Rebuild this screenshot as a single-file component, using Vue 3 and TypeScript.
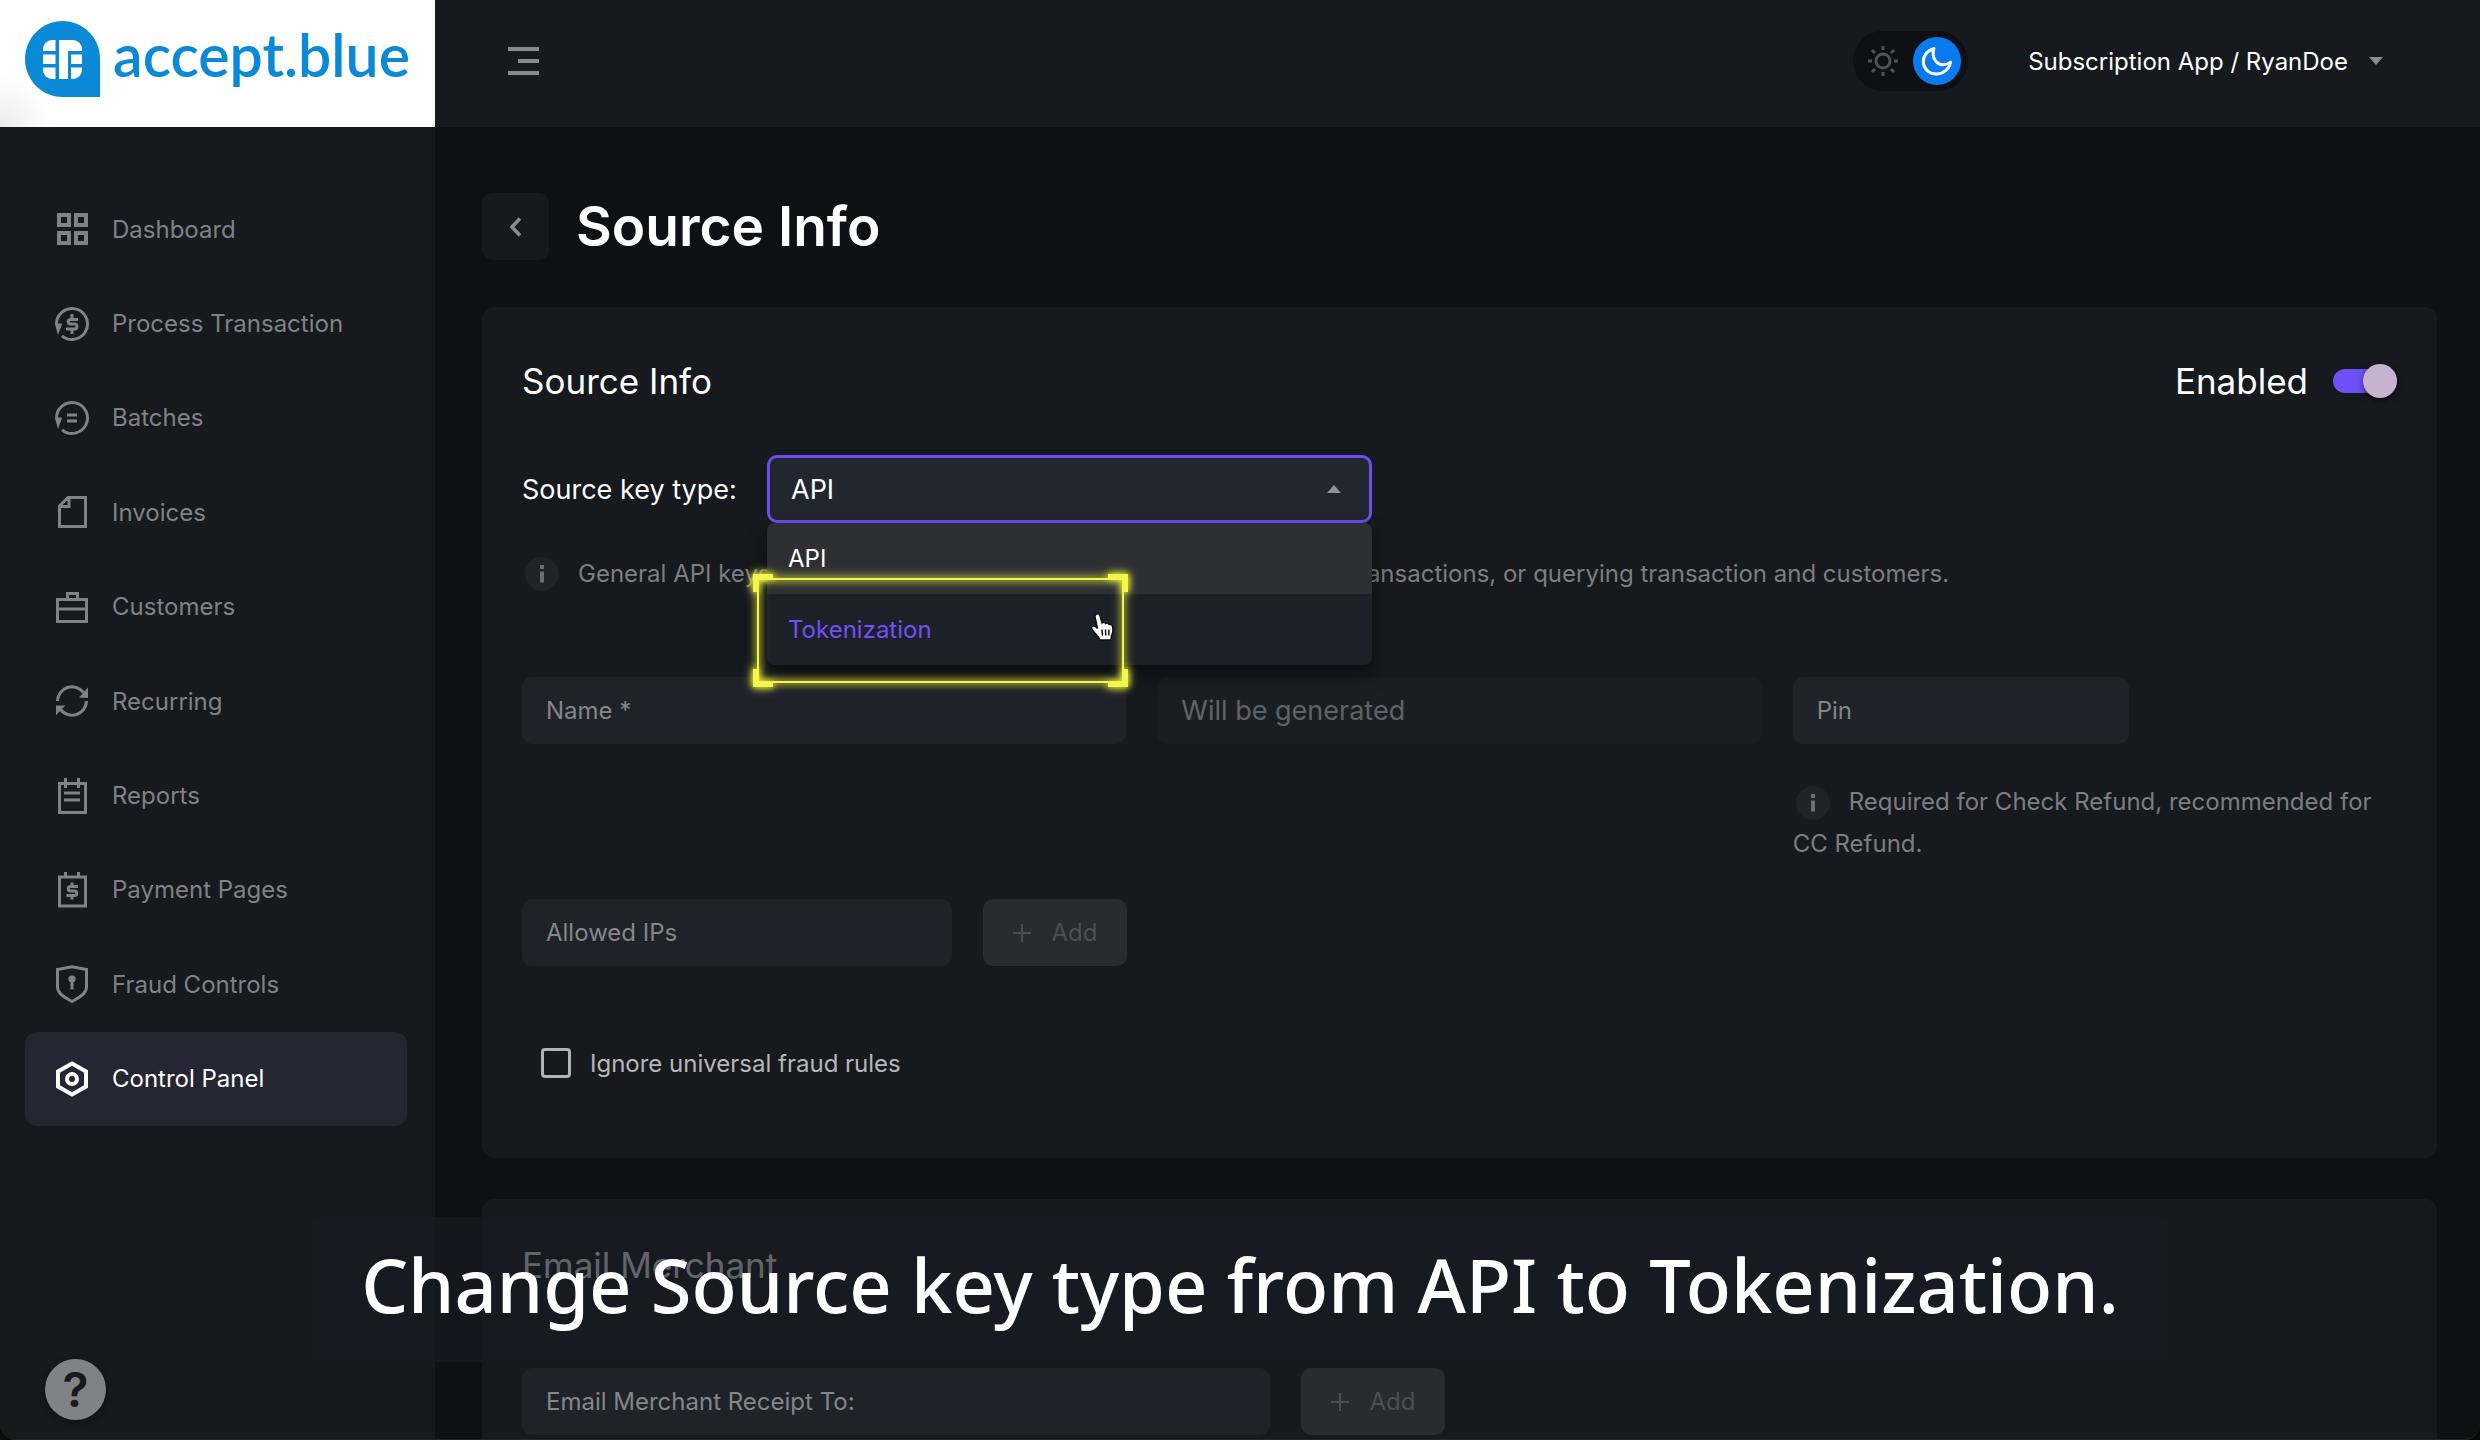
<script setup lang="ts">
import { ref } from 'vue'

interface NavItem {
  label: string
  icon: string
  active?: boolean
}

const navItems: NavItem[] = [
  { label: 'Dashboard', icon: 'dashboard' },
  { label: 'Process Transaction', icon: 'process' },
  { label: 'Batches', icon: 'batches' },
  { label: 'Invoices', icon: 'invoices' },
  { label: 'Customers', icon: 'customers' },
  { label: 'Recurring', icon: 'recurring' },
  { label: 'Reports', icon: 'reports' },
  { label: 'Payment Pages', icon: 'payment' },
  { label: 'Fraud Controls', icon: 'fraud' },
  { label: 'Control Panel', icon: 'control', active: true },
]

const keyTypes = ['API', 'Tokenization']
const keyType = ref('API')
const hovered = ref('Tokenization')
const enabled = ref(true)
const ignoreRules = ref(false)
const name = ref('')
const pin = ref('')
const allowedIps = ref('')
const receiptTo = ref('')
</script>

<template>
  <div class="app">
    <aside class="sidebar">
      <a class="logo" href="#">
        <svg class="logo-mark" viewBox="0 0 75 76" aria-hidden="true">
          <path d="M37.500 0C58.200 0 75 16.800 75 37.500V76H37.500C16.800 76 0 59 0 38S16.800 0 37.500 0Z" fill="#0a8ad6" />
          <rect x="18" y="19" width="39" height="39" rx="9" fill="#fff" />
          <path d="M30.500 19h3.500v39h-3.500zM18 30h13v3.500H18zM18 43h13v3.500H18zM43 30h14v3.500H46V58h-3zM46 43h11v3.500H46z" fill="#0a8ad6" />
        </svg>
        <span class="logo-text">accept.blue</span>
      </a>
      <nav class="nav">
        <a
          v-for="item in navItems"
          :key="item.label"
          href="#"
          class="nav-item"
          :class="{ active: item.active }"
        >
          <svg class="nav-icon" viewBox="0 0 36 36" aria-hidden="true">
            <g v-if="item.icon === 'dashboard'" stroke-width="4">
              <rect x="5" y="4" width="10" height="10" /><rect x="22" y="4" width="10" height="10" />
              <rect x="5" y="22" width="10" height="10" /><rect x="22" y="22" width="10" height="10" />
            </g>
            <g v-else-if="item.icon === 'process'">
              <path d="M2.500 18A15.500 15.500 0 1 1 8 29.800" />
              <path class="solid" d="M.8 17.500h7.400L4 29z" />
              <path d="M24 13.500h-7.500a2.300 2.300 0 0 0 0 4.600h4a2.500 2.500 0 0 1 0 5H12M18 8v5M18 23v5" />
            </g>
            <g v-else-if="item.icon === 'batches'">
              <path d="M2.500 18A15.500 15.500 0 1 1 8 29.800" />
              <path class="solid" d="M.8 17.500h7.400L4 29z" />
              <path d="M13 15h10M13 21h10" />
            </g>
            <path v-else-if="item.icon === 'invoices'" d="M14 3.500H31.500V32.500H5.500V12ZM15 3.500V12.500H5.500" />
            <path v-else-if="item.icon === 'customers'" d="M3.500 10.500h29v22h-29zM3.500 20h29M13.500 10V4.500h10V10" />
            <g v-else-if="item.icon === 'recurring'">
              <path d="M3.500 18A14.500 14.500 0 0 1 29.500 9.500M32.500 18A14.500 14.500 0 0 1 6.500 26.500" />
              <path class="solid" d="M34 4.500V15l-9-.5zM2 22.500h9.500L2 32z" />
            </g>
            <path v-else-if="item.icon === 'reports'" d="M5.500 5.500h26v29h-26zM11.500 0v10M24.500 0v10M10 15h16M10 22h16" />
            <g v-else-if="item.icon === 'payment'">
              <path d="M5.500 5h26v29h-26zM11.500 0v5M24.500 0v5" />
              <path d="M24 14.500h-7.500a2.200 2.200 0 0 0 0 4.500h4a2.200 2.200 0 0 1 0 4.500H12.500M18 10.500v4M18 23.500v4" />
            </g>
            <g v-else-if="item.icon === 'fraud'">
              <path d="M18 .8L32.500 3.500V21C32.500 27.500 26.500 30.500 18 35.500 9.500 30.500 3.500 27.500 3.500 21V3.500Z" />
              <circle class="solid" cx="18" cy="13" r="3.600" />
              <path d="M18 13v10.500" />
            </g>
            <g v-else stroke-width="4">
              <path d="M18 2.500L32 10.500V25.500L18 33.500 4 25.500V10.500Z" />
              <circle cx="18" cy="18" r="5" />
            </g>
          </svg>
          <span>{{ item.label }}</span>
        </a>
      </nav>
      <button class="help" type="button">?</button>
    </aside>

    <div class="page">
      <header class="topbar">
        <button class="icon-btn" type="button" aria-label="Menu">
          <svg width="32" height="28" viewBox="0 0 32 28" aria-hidden="true">
            <path d="M0 2h31M10 14h21M0 26h31" stroke="#8a8b8e" stroke-width="4" />
          </svg>
        </button>
        <div class="topbar-right">
          <button class="theme" type="button" aria-label="Theme">
            <svg class="sun" viewBox="0 0 32 32" aria-hidden="true">
              <circle cx="16" cy="16" r="7" />
              <path d="M16 1v4M16 27v4M1 16h4M27 16h4M5 5l3 3M24 24l3 3M5 27l3-3M24 8l3-3" />
            </svg>
            <span class="moon-dot">
              <svg viewBox="0 0 48 48" aria-hidden="true">
                <path d="M21 11.500C13 14 9.500 20.500 10.500 26.500 11.700 33 17 37.500 24 37 31 36.500 36.500 31.500 37.500 25 33 29 26.500 28.500 23 24.500 19.500 20.500 19.500 16 21 11.500Z" />
              </svg>
            </span>
          </button>
          <button class="account" type="button">
            <span>Subscription App / RyanDoe</span>
            <svg width="14" height="8" viewBox="0 0 14 8" aria-hidden="true"><path d="M0 0h14L7 8z" fill="#8a8b8e" /></svg>
          </button>
        </div>
      </header>

      <main class="main">
        <div class="title-row">
          <button class="back" type="button" aria-label="Back">
            <svg width="12" height="20" viewBox="0 0 12 20" aria-hidden="true">
              <path d="M10 1.500L2 10l8 8.500" fill="none" stroke="#8a8b8e" stroke-width="3.500" />
            </svg>
          </button>
          <h1>Source Info</h1>
        </div>

        <section class="card">
          <div class="card-head">
            <h2>Source Info</h2>
            <label class="switch">
              <span>Enabled</span>
              <input v-model="enabled" type="checkbox" role="switch" />
            </label>
          </div>

          <div class="type-row">
            <label for="key-type">Source key type:</label>
            <div class="select-wrap">
              <select id="key-type" v-model="keyType">
                <option v-for="t in keyTypes" :key="t">{{ t }}</option>
              </select>
              <svg class="caret" viewBox="0 0 14 8" aria-hidden="true"><path d="M0 8h14L7 0z" fill="#8f949a" /></svg>
              <ul class="menu" role="listbox" aria-label="Source key type">
                <li
                  v-for="t in keyTypes"
                  :key="t"
                  role="option"
                  :aria-selected="t === keyType"
                  :class="{ selected: t === keyType, hovered: t === hovered }"
                >{{ t }}</li>
              </ul>
              <div class="highlight"><i class="tl" /><i class="tr" /><i class="bl" /><i class="br" /></div>
              <svg class="cursor" viewBox="0 0 26 30" aria-hidden="true">
                <path
                  d="M6.500 2C8 1.200 9.500 2 10 3.500L12 11C13 9.800 14.800 10 15.500 11.500 16.800 10.500 18.300 11 19 12.500 20.500 11.800 22 12.500 22.500 14.500 23.200 17.500 23.500 20 21.500 23.500L21 28H10C8.500 24.500 6 22.500 3.500 19.500 1.500 17 1 15 2.500 14.200 4 13.500 6 14.500 7.500 16.500L5 5C4.700 3.500 5.200 2.500 6.500 2Z"
                  fill="#fff" stroke="#111" stroke-width="1.500" />
                <path d="M12 17.500l.5 6M15.500 17.500l.3 6M19 17.500l-.2 6" stroke="#111" stroke-width="1.500" fill="none" />
              </svg>
            </div>
          </div>

          <p class="note key-note">
            <svg class="info" viewBox="0 0 34 34" aria-hidden="true">
              <circle cx="17" cy="17" r="17" /><path d="M17 8v4M17 14.500v11" />
            </svg>
            <span class="note-start">General API keys</span>
            <span>transactions, or querying transaction and customers.</span>
          </p>

          <div class="grid">
            <div class="field">
              <label for="name">Name *</label>
              <input id="name" v-model="name" type="text" />
            </div>
            <div class="field off">
              <input type="text" value="Will be generated" aria-label="Source key" disabled />
            </div>
            <div class="pin-col">
              <div class="field pin">
                <label for="pin">Pin</label>
                <input id="pin" v-model="pin" type="text" />
              </div>
              <p class="note pin-note">
                <svg class="info" viewBox="0 0 34 34" aria-hidden="true">
                  <circle cx="17" cy="17" r="17" /><path d="M17 8v4M17 14.500v11" />
                </svg>Required for Check Refund, recommended for CC Refund.
              </p>
            </div>
          </div>

          <div class="add-row">
            <div class="field ips">
              <label for="ips">Allowed IPs</label>
              <input id="ips" v-model="allowedIps" type="text" />
            </div>
            <button class="add" type="button" disabled>
              <svg width="18" height="18" viewBox="0 0 18 18" aria-hidden="true"><path d="M9 0v18M0 9h18" stroke="currentColor" stroke-width="2" /></svg>
              Add
            </button>
          </div>

          <label class="check">
            <input v-model="ignoreRules" type="checkbox" />
            <span>Ignore universal fraud rules</span>
          </label>
        </section>

        <section class="card card-email">
          <div class="card-head">
            <h2>Email Merchant</h2>
          </div>
          <div class="add-row">
            <div class="field email">
              <label for="receipt">Email Merchant Receipt To:</label>
              <input id="receipt" v-model="receiptTo" type="email" />
            </div>
            <button class="add" type="button" disabled>
              <svg width="18" height="18" viewBox="0 0 18 18" aria-hidden="true"><path d="M9 0v18M0 9h18" stroke="currentColor" stroke-width="2" /></svg>
              Add
            </button>
          </div>
        </section>
      </main>
    </div>

    <div class="caption">
      <p>Change Source key type from API to Tokenization.</p>
    </div>
  </div>
</template>

<style>
body {
  margin: 0;
  background: #0a0c04;
}
</style>

<style scoped>
* {
  box-sizing: border-box;
}

.app {
  display: flex;
  min-height: 100vh;
  overflow: hidden;
  background: #0e1014;
  border-bottom: 1px solid #24282b;
  border-radius: 0 0 16px 16px;
  color: #fff;
  font-family: Inter, "Liberation Sans", sans-serif;
  font-size: 24px;
}

h1,
h2,
p,
ul {
  margin: 0;
  padding: 0;
}

button,
input,
select {
  margin: 0;
  border: 0;
  font: inherit;
  color: inherit;
}

button {
  padding: 0;
  background: none;
}

a {
  color: inherit;
  text-decoration: none;
}

svg {
  display: block;
}

/* Sidebar */
.sidebar {
  display: flex;
  flex: 0 0 435px;
  flex-direction: column;
  min-width: 0;
  background: #16191d;
}

.logo {
  display: flex;
  align-items: flex-start;
  gap: 13px;
  height: 127px;
  padding: 21px 0 21px 25px;
  background: radial-gradient(circle at 0 100%, #ececec, #fff 52px);
}

.logo-mark {
  flex: none;
  width: 75px;
  height: 76px;
}

.logo-text {
  color: #0a8ad6;
  font-family: Lato, sans-serif;
  font-size: 59px;
  font-weight: 600;
  line-height: 68px;
}

.nav {
  display: grid;
  grid-auto-rows: 1fr;
  min-height: 944px;
  margin: 55px 28px 0 25px;
}

.nav-item {
  display: flex;
  align-items: center;
  gap: 22px;
  padding-left: 29px;
  border-radius: 12px;
  color: #808285;
}

.nav-item.active {
  background: #252632;
  color: #fff;
}

.nav-icon {
  width: 36px;
  height: 36px;
  overflow: visible;
  fill: none;
  stroke: currentColor;
  stroke-width: 3;
}

.nav-icon .solid {
  fill: currentColor;
  stroke: none;
}

.help {
  width: 61px;
  height: 61px;
  margin: auto 0 19px 45px;
  border-radius: 50%;
  background: #808286;
  box-shadow: 0 2px 6px #0006;
  color: #16191d;
  font-size: 48px;
  font-weight: 600;
  line-height: 61px;
}

/* Top bar */
.page {
  display: flex;
  flex: 1;
  flex-direction: column;
  min-width: 0;
}

.topbar {
  display: flex;
  align-items: center;
  justify-content: space-between;
  height: 127px;
  padding: 0 97px 5px 73px;
  background: #16191d;
}

.topbar-right {
  display: flex;
  align-items: center;
  gap: 60px;
}

.theme {
  display: flex;
  align-items: center;
  justify-content: space-between;
  width: 115px;
  height: 60px;
  padding: 0 7px 0 14px;
  border-radius: 30px;
  background: #0e1014;
}

.sun {
  width: 32px;
  height: 32px;
  fill: none;
  stroke: #505255;
  stroke-width: 3;
}

.moon-dot {
  width: 48px;
  height: 48px;
  border-radius: 50%;
  background: #0a7af0;
}

.moon-dot svg {
  fill: none;
  stroke: #fff;
  stroke-width: 3;
  stroke-linejoin: round;
}

.account {
  display: flex;
  align-items: center;
  gap: 21px;
}

/* Main */
.main {
  display: flex;
  flex: 1;
  flex-direction: column;
  padding: 66px 43px 0 47px;
}

.title-row {
  display: flex;
  align-items: center;
  gap: 27px;
  height: 67px;
  margin-bottom: 47px;
}

.back {
  display: grid;
  place-items: center;
  width: 67px;
  height: 67px;
  border-radius: 10px;
  background: #16191d;
}

h1 {
  font-size: 55px;
  font-weight: 600;
  line-height: 67px;
}

h2 {
  font-size: 35px;
  font-weight: 400;
}

.card {
  padding: 50px 40px 74px;
  border-radius: 12px;
  background: #16191d;
}

.card-email {
  flex: 1;
  margin-top: 41px;
  padding: 42px 40px 4px;
  border-radius: 12px 12px 0 0;
}

.card-head {
  display: flex;
  align-items: center;
  justify-content: space-between;
  height: 48px;
}

.switch {
  display: flex;
  align-items: center;
  gap: 25px;
  font-size: 35px;
}

.switch input {
  position: relative;
  width: 64px;
  height: 24px;
  border-radius: 12px;
  appearance: none;
  background: #44464a;
}

.switch input:checked {
  background: #6f4ff8;
}

.switch input::after {
  content: "";
  position: absolute;
  top: -5px;
  right: 0;
  width: 34px;
  height: 34px;
  border-radius: 50%;
  background: #c5b3cf;
  box-shadow: 0 3px 6px #0008;
}

.type-row {
  display: flex;
  align-items: center;
  margin-top: 50px;
  font-size: 27px;
}

.type-row > label {
  width: 245px;
}

.select-wrap {
  position: relative;
  z-index: 1;
  width: 605px;
}

select {
  display: block;
  width: 100%;
  height: 68px;
  padding: 0 21px;
  border: 3px solid #6c4df0;
  border-radius: 10px;
  outline: none;
  appearance: none;
  background: #22272f;
}

.caret {
  position: absolute;
  top: 30px;
  right: 31px;
  width: 14px;
  height: 8px;
}

.menu {
  position: absolute;
  top: 100%;
  left: 0;
  right: 0;
  overflow: hidden;
  border-radius: 8px;
  background: #1d2027;
  box-shadow: 0 10px 20px #0007;
  list-style: none;
  font-size: 24px;
}

.menu li {
  height: 71px;
  padding-left: 21px;
  line-height: 71px;
}

.menu .selected {
  background: #2d2f33;
}

.menu .hovered {
  color: #6f51f6;
}

/* Marker frame around the option being pointed at */
.highlight {
  position: absolute;
  top: 119px;
  left: -14px;
  width: 375px;
  height: 113px;
  filter: drop-shadow(0 0 3px #e8ec3c) drop-shadow(0 0 4px #c8cc3c);
}

.highlight::before {
  content: "";
  position: absolute;
  inset: 4px;
  border: 2px solid #f4f64a;
}

.highlight i {
  position: absolute;
  width: 20px;
  height: 18px;
  border: 0 solid #f4f64a;
}

.highlight .tl {
  top: 0;
  left: 0;
  border-width: 6px 0 0 6px;
}

.highlight .tr {
  top: 0;
  right: 0;
  border-width: 6px 6px 0 0;
}

.highlight .bl {
  bottom: 0;
  left: 0;
  border-width: 0 0 6px 6px;
}

.highlight .br {
  right: 0;
  bottom: 0;
  border-width: 0 6px 6px 0;
}

.cursor {
  position: absolute;
  top: 157px;
  left: 323px;
  width: 26px;
  height: 30px;
}

.note {
  color: #7c7e81;
  line-height: 42px;
}

.info {
  display: inline-block;
  flex: none;
  width: 34px;
  height: 34px;
  margin: 0 19px 0 3px;
  vertical-align: middle;
  fill: #202427;
}

.info path {
  stroke: #6c6f72;
  stroke-width: 4;
}

.key-note {
  display: flex;
  align-items: center;
  margin-top: 30px;
}

.note-start {
  width: 772px;
}

.grid {
  display: grid;
  grid-template-columns: repeat(3, 1fr);
  align-items: start;
  gap: 31px;
  margin-top: 82px;
}

.field {
  display: grid;
  height: 67px;
  border-radius: 10px;
  background: #1f2229;
}

.field > * {
  grid-area: 1 / 1;
}

.field label {
  align-self: center;
  padding-left: 24px;
  color: #84868a;
  pointer-events: none;
}

.field input {
  width: 100%;
  min-width: 0;
  padding: 0 24px;
  border-radius: 10px;
  outline: none;
  background: transparent;
}

.off {
  background: #1a1e20;
}

.off input {
  color: #606366;
  font-size: 27px;
}

.pin {
  width: 336px;
}

.pin-note {
  margin-top: 37px;
}

.add-row {
  display: flex;
  gap: 31px;
  margin-top: 34px;
}

.ips {
  width: 430px;
}

.email {
  width: 748px;
}

.card-email .add-row {
  margin-top: 79px;
}

.add {
  display: flex;
  align-items: center;
  justify-content: center;
  gap: 21px;
  width: 144px;
  height: 67px;
  border-radius: 10px;
  background: #282c2e;
  color: #4c4f52;
}

.check {
  display: flex;
  align-items: center;
  gap: 19px;
  height: 42px;
  margin: 76px 0 0 19px;
  color: #b6b7b9;
}

.check input {
  width: 30px;
  height: 30px;
  border: 3px solid #b2b3b6;
  border-radius: 4px;
  appearance: none;
}

/* Caption over the page */
.caption {
  position: fixed;
  right: 0;
  bottom: 78px;
  left: 0;
  z-index: 2;
  display: flex;
  justify-content: center;
  pointer-events: none;
}

.caption p {
  padding: 0 50px 10px;
  border-radius: 8px;
  background: rgba(24, 27, 36, 0.68);
  font-family: "Noto Sans", sans-serif;
  font-size: 74px;
  font-weight: 500;
  line-height: 135px;
  white-space: nowrap;
}
</style>
